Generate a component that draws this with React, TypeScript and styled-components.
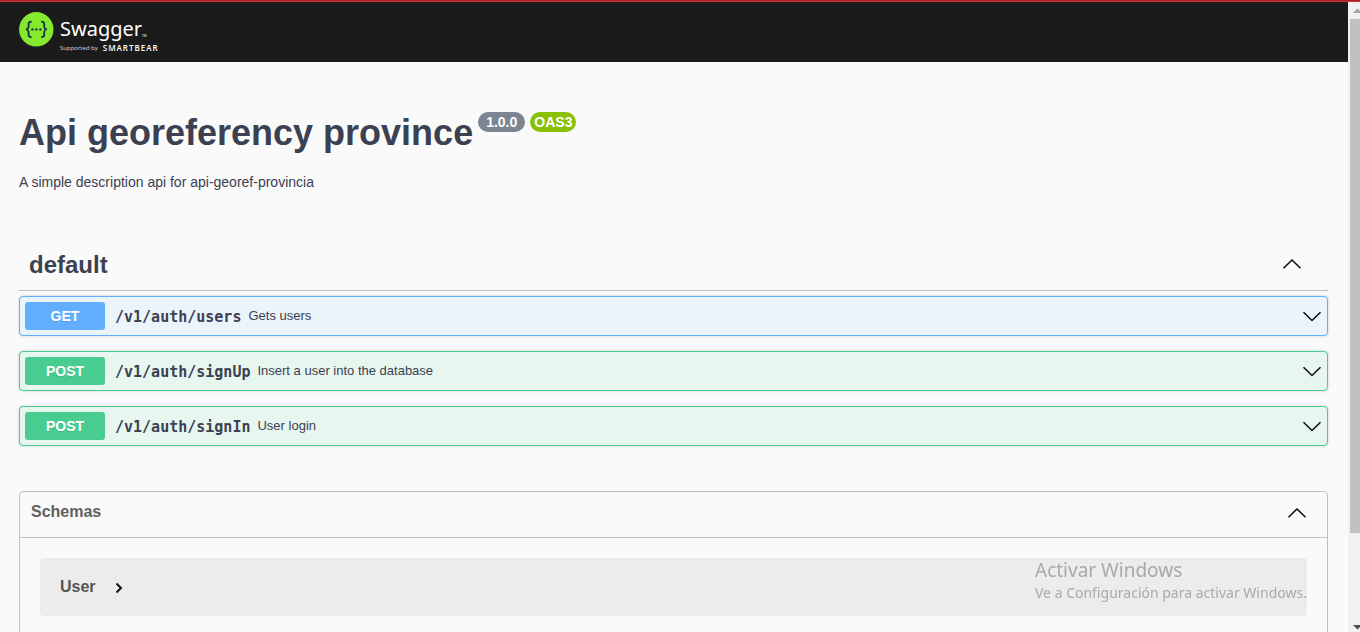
import React from "react";
import styled, { createGlobalStyle } from "styled-components";

const GlobalStyle = createGlobalStyle`
  *, *::before, *::after { box-sizing: border-box; }
  body {
    margin: 0;
    background: #fafafa;
    color: #3b4151;
    font-family: "Liberation Sans", Arial, sans-serif;
  }
  h1, h2, h3, p { margin: 0; }
  button { font: inherit; color: inherit; border: 0; background: none; padding: 0; cursor: pointer; }
`;

const Frame = styled.div`
  display: flex;
  flex-direction: column;
  height: 100vh;
  overflow: hidden;
`;

const LoadingLine = styled.div`
  flex: none;
  height: 2px;
  background: #c9393d;
  border-top: 1px solid #a81f22;
`;

const Viewport = styled.div`
  flex: 1;
  min-height: 0;
  display: flex;
`;

const Page = styled.div`
  flex: 1;
  min-width: 0;
  overflow: hidden;
`;

const Topbar = styled.header`
  height: 60px;
  padding: 10px 19px 0;
  background: #1b1b1b;
  color: #fff;
`;

const LogoLink = styled.a`
  display: inline-flex;
  align-items: flex-start;
  gap: 6px;
  color: inherit;
  text-decoration: none;
  font-family: "Open Sans", "Noto Sans", sans-serif;
`;

const LogoText = styled.span`
  display: flex;
  flex-direction: column;
  padding-top: 2px;
`;

const Wordmark = styled.span`
  display: flex;
  align-items: flex-end;
  font-family: "Noto Sans", "Open Sans", sans-serif;
  font-size: 20px;
  line-height: 30px;
  font-weight: 400;

  small {
    font-size: 3px;
    line-height: 16px;
  }
`;

const Supported = styled.span`
  display: flex;
  align-items: center;
  gap: 5px;
  font-size: 6px;
  line-height: 8px;
  color: #ddd;

  b {
    font-size: 8px;
    font-weight: 600;
    letter-spacing: 1px;
    color: #fff;
  }
`;

const Main = styled.main`
  padding: 50px 20px 0 19px;
`;

const TitleRow = styled.div`
  display: flex;
  align-items: flex-start;
  gap: 5px;
`;

const Title = styled.h1`
  font-size: 36px;
  line-height: 41px;
  font-weight: 700;
`;

const Badge = styled.span<{ $color: string; $pad: number }>`
  padding: 0 ${(p) => p.$pad}px;
  border-radius: 10px;
  background: ${(p) => p.$color};
  color: #fff;
  font-size: 14px;
  line-height: 20px;
  font-weight: 700;
`;

const Description = styled.p`
  margin-top: 21px;
  font-size: 14px;
  line-height: 16px;
`;

const TagHeader = styled.h2`
  margin-top: 50px;
  border-bottom: 1px solid #bfbfc1;
`;

const TagButton = styled.button`
  display: flex;
  align-items: center;
  justify-content: space-between;
  width: 100%;
  height: 50px;
  padding: 0 26px 0 10px;
  font-size: 24px;
  font-weight: 700;

  svg { margin-bottom: 2px; }
`;

const Operations = styled.div`
  display: flex;
  flex-direction: column;
  gap: 15px;
  padding-top: 5px;
`;

const Operation = styled.button<{ $color: string; $tint: string }>`
  display: flex;
  align-items: center;
  width: 100%;
  height: 40px;
  padding: 5px;
  border: 1px solid ${(p) => p.$color};
  border-radius: 4px;
  background: ${(p) => p.$tint};
  box-shadow: 0 0 3px rgba(0, 0, 0, 0.19);
  text-align: left;
`;

const Method = styled.span<{ $color: string }>`
  width: 80px;
  border-radius: 3px;
  background: ${(p) => p.$color};
  color: #fff;
  font-size: 14px;
  line-height: 28px;
  font-weight: 700;
  text-align: center;
  text-shadow: 0 1px 0 rgba(0, 0, 0, 0.1);
`;

const Path = styled.span`
  padding: 2px 7px 0 10px;
  font-family: "DejaVu Sans Mono", "Liberation Mono", monospace;
  font-size: 15px;
  font-weight: 700;
`;

const Summary = styled.span`
  flex: 1;
  padding-bottom: 2px;
  font-size: 13px;
`;

const Schemas = styled.section`
  margin-top: 45px;
  border: 1px solid #bfbfc1;
  border-radius: 4px;
`;

const SchemasButton = styled.button`
  display: flex;
  align-items: center;
  justify-content: space-between;
  width: 100%;
  height: 46px;
  padding: 0 20px 0 11px;
  border-bottom: 1px solid #bfbfc1;
  color: #606060;
  font-size: 16px;
  font-weight: 700;

  span { padding-bottom: 5px; }
  svg { margin-bottom: 4px; }
`;

const Model = styled.div`
  margin: 20px;
  border-radius: 4px;
  background: #ececec;
`;

const ModelButton = styled.button`
  display: flex;
  align-items: center;
  gap: 19px;
  height: 58px;
  padding: 0 20px;
  color: #555;
  font-size: 16px;
  font-weight: 700;

  svg { margin-top: 2px; }
`;

const Scrollbar = styled.div`
  flex: none;
  width: 12px;
  display: flex;
  flex-direction: column;
  align-items: flex-end;
  overflow: hidden;
  background: #f1f1f1;
`;

const ScrollThumb = styled.div`
  width: 10px;
  flex: 514;
  background: #c1c1c1;
`;

const ScrollSpace = styled.div`
  flex: 82;
`;

const Watermark = styled.aside`
  position: fixed;
  right: 50px;
  bottom: 29px;
  width: 275px;
  color: #a9a9a9;
  font-family: "Noto Sans", "Open Sans", sans-serif;
  font-size: 14px;
  line-height: 20px;
  white-space: nowrap;
  pointer-events: none;

  strong {
    display: block;
    font-size: 19px;
    line-height: 25px;
    font-weight: 400;
  }
`;

const Chevron = ({ up = false }: { up?: boolean }) => (
  <svg width="20" height="20" viewBox="0 0 20 20" fill="none" stroke="#111" strokeWidth="1.6" aria-hidden="true">
    <path d={up ? "M1.500 14.300 10 6l8.500 8.300" : "M1.500 6.200 10 14.500l8.500-8.300"} />
  </svg>
);

const SwaggerMark = () => (
  <svg width="35" height="35" viewBox="0 0 35 35" aria-hidden="true">
    <circle cx="17.300" cy="17.300" r="17.200" fill="#85ea2d" />
    <g fill="none" stroke="#173647" strokeWidth="1.900">
      <path d="M12.600 9.700c-2.700-.2-3.100.9-3 3.200.2 2.700.1 4-2.600 4.500 2.700.5 2.800 1.800 2.600 4.500-.1 2.300.3 3.400 3 3.200" />
      <path d="M22.200 9.700c2.700-.2 3.100.9 3 3.200-.2 2.700-.1 4 2.600 4.500-2.700.5-2.800 1.800-2.600 4.500.1 2.300-.3 3.400-3 3.200" />
    </g>
    <g fill="#173647">
      <circle cx="13.400" cy="17.400" r="1.200" />
      <circle cx="17.400" cy="17.400" r="1.200" />
      <circle cx="21.400" cy="17.400" r="1.200" />
    </g>
  </svg>
);

const ScrollArrow = ({ down = false }: { down?: boolean }) => (
  <svg width="10" height="17" viewBox="0 0 10 17" aria-hidden="true">
    <path d={down ? "M3 10h9l-4.500 4.500z" : "M3 11h9L7.500 6.500z"} fill={down ? "#505050" : "#a3a3a3"} />
  </svg>
);

const METHODS = {
  GET: { color: "#61affe", tint: "#ebf3fb" },
  POST: { color: "#49cc90", tint: "#e8f6f0" },
};

const OPERATIONS: { method: keyof typeof METHODS; path: string; summary: string }[] = [
  { method: "GET", path: "/v1/auth/users", summary: "Gets users" },
  { method: "POST", path: "/v1/auth/signUp", summary: "Insert a user into the database" },
  { method: "POST", path: "/v1/auth/signIn", summary: "User login" },
];

export default function App() {
  return (
    <Frame>
      <GlobalStyle />
      <LoadingLine />
      <Viewport>
        <Page>
          <Topbar>
            <LogoLink href="#">
              <SwaggerMark />
              <LogoText>
                <Wordmark>Swagger<small>TM</small></Wordmark>
                <Supported>Supported by <b>SMARTBEAR</b></Supported>
              </LogoText>
            </LogoLink>
          </Topbar>
          <Main>
            <TitleRow>
              <Title>Api georeferency province</Title>
              <Badge $color="#7d8492" $pad={8}>1.0.0</Badge>
              <Badge $color="#89bf04" $pad={4}>OAS3</Badge>
            </TitleRow>
            <Description>A simple description api for api-georef-provincia</Description>
            <TagHeader>
              <TagButton aria-expanded="true">default<Chevron up /></TagButton>
            </TagHeader>
            <Operations>
              {OPERATIONS.map((op) => (
                <Operation key={op.path} $color={METHODS[op.method].color} $tint={METHODS[op.method].tint}>
                  <Method $color={METHODS[op.method].color}>{op.method}</Method>
                  <Path>{op.path}</Path>
                  <Summary>{op.summary}</Summary>
                  <Chevron />
                </Operation>
              ))}
            </Operations>
            <Schemas>
              <SchemasButton aria-expanded="true"><span>Schemas</span><Chevron up /></SchemasButton>
              <Model>
                <ModelButton aria-expanded="false">
                  User
                  <svg width="8" height="12" viewBox="0 0 8 12" fill="none" stroke="#111" strokeWidth="2" aria-hidden="true">
                    <path d="M1.500 1.500 6 6l-4.500 4.500" />
                  </svg>
                </ModelButton>
              </Model>
            </Schemas>
          </Main>
        </Page>
        <Scrollbar aria-hidden="true">
          <ScrollArrow />
          <ScrollThumb />
          <ScrollSpace />
          <ScrollArrow down />
        </Scrollbar>
      </Viewport>
      <Watermark>
        <strong>Activar Windows</strong>
        Ve a Configuración para activar Windows.
      </Watermark>
    </Frame>
  );
}
